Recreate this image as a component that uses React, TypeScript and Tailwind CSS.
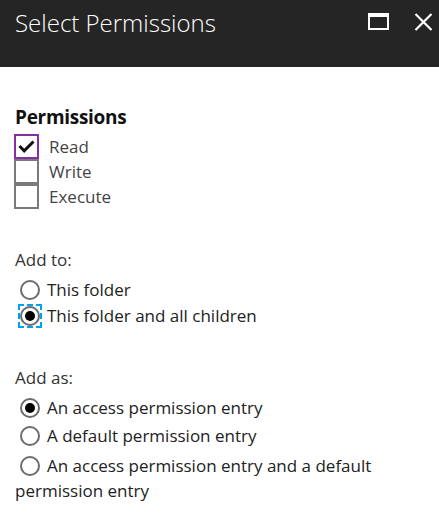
import React from "react";

const font = { fontFamily: '"Open Sans", "Noto Sans", sans-serif' };

function Radio({ checked, focus }: { checked?: boolean; focus?: boolean }) {
  const circle = (
    <span className="flex h-[20px] w-[20px] items-center justify-center rounded-full border-2 border-[#6b6b6b] bg-white">
      {checked && <span className="h-[10px] w-[10px] rounded-full bg-black" />}
    </span>
  );
  return (
    <span className="relative inline-flex h-[20px] w-[20px] shrink-0 align-[-4px]">
      {circle}
      {focus && (
        <span className="pointer-events-none absolute left-[-2px] top-[-2px] h-[24px] w-[24px] border-2 border-dashed border-[#00a2ed]" />
      )}
    </span>
  );
}

function Check({ checked, first }: { checked?: boolean; first?: boolean }) {
  return (
    <span
      className={`flex h-[25px] w-[25px] shrink-0 items-center justify-center border-2 ${
        first ? "border-[#8a2da5]" : "border-[#7a7a7a]"
      } bg-white`}
    >
      {checked && (
        <svg width="17" height="13" viewBox="0 0 17 13">
          <path d="M1.5 6 L6.2 10.8 L15.5 1.5" fill="none" stroke="#111" strokeWidth="3" />
        </svg>
      )}
    </span>
  );
}

export default function App() {
  return (
    <div className="h-[523px] w-[439px] bg-white" style={font}>
      <div className="flex h-[67px] items-start justify-between bg-[#252525] pl-[15px] pr-[6px]">
        <div className="mt-[5px] text-[24px] font-light leading-[36px] text-white">Select Permissions</div>
        <div className="mt-[13px] flex items-start gap-[25px]">
          <span className="h-[17px] w-[21px] border-2 border-t-[4px] border-white" />
          <svg width="19" height="18" viewBox="0 0 19 18">
            <path d="M1.5 1 L17.5 17 M17.5 1 L1.5 17" stroke="white" strokeWidth="2.2" />
          </svg>
        </div>
      </div>

      <div className="px-[14px] pt-[36px]">
        <div className="pl-[1px] text-[19px] font-bold leading-[28px] tracking-[-0.3px] text-[#111]">Permissions</div>
        <div className="mt-[3px] flex flex-col">
          {[
            ["Read", true],
            ["Write", false],
            ["Execute", false],
          ].map(([label, checked], i) => (
            <div key={label as string} className="flex h-[25px] items-center">
              <Check checked={checked as boolean} first={i === 0} />
              <span className="ml-[10px] text-[17px] leading-[25px] text-[#444]">{label as string}</span>
            </div>
          ))}
        </div>

        <div className="mt-[38px] pl-[1px] text-[17px] leading-[26px] text-[#333]">Add to:</div>
        <div className="mt-[4px] flex flex-col text-[17px] text-[#222]">
          <div className="flex h-[26px] items-center pl-[6px]">
            <Radio />
            <span className="ml-[7px] leading-[26px]">This folder</span>
          </div>
          <div className="flex h-[26px] items-center pl-[6px]">
            <Radio checked focus />
            <span className="ml-[7px] leading-[26px]">This folder and all children</span>
          </div>
        </div>

        <div className="mt-[36px] pl-[1px] text-[17px] leading-[26px] text-[#333]">Add as:</div>
        <div className="mt-[3px] flex flex-col text-[17px] text-[#222]">
          <div className="flex h-[28px] items-center pl-[6px]">
            <Radio checked />
            <span className="ml-[7px]">An access permission entry</span>
          </div>
          <div className="flex h-[28px] items-center pl-[6px]">
            <Radio />
            <span className="ml-[7px]">A default permission entry</span>
          </div>
          <div className="mt-[3px] pl-[1px] leading-[25px]">
            <span className="pl-[5px]">
              <Radio />
            </span>
            <span className="ml-[7px]">An access permission entry and a default permission entry</span>
          </div>
        </div>
      </div>
    </div>
  );
}
